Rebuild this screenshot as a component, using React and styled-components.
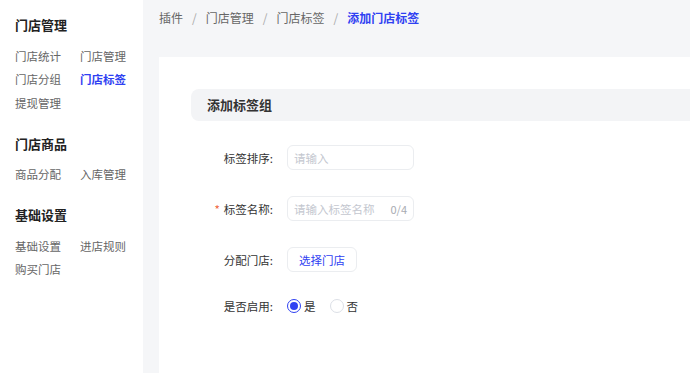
import React from "react";
import styled, { createGlobalStyle } from "styled-components";

const Global = createGlobalStyle`
  html, body { margin: 0; padding: 0; }
  body { font-family: "Noto Sans CJK SC", "Noto Sans", sans-serif; color: #333; }
  * { box-sizing: border-box; }
`;

const BLUE = "#2f41f2";

const Page = styled.div`
  display: flex;
  width: 100%;
  height: 100vh;
  overflow: hidden;
`;

const Sidebar = styled.aside`
  width: 143px;
  flex-shrink: 0;
  background: #fff;
  padding: 15px 0 0 15px;
`;

const SectionTitle = styled.div`
  font-size: 13px;
  font-weight: 700;
  line-height: 20px;
  color: #222;
  margin-top: ${(p) => (p.$first ? 0 : "19px")};
  margin-bottom: 9px;
`;

const ItemGrid = styled.div`
  display: grid;
  grid-template-columns: 65px 65px;
  grid-auto-rows: 23.5px;
  align-items: center;
`;

const Item = styled.div`
  font-size: 11.5px;
  line-height: 16px;
  color: ${(p) => (p.$active ? BLUE : "#666")};
  font-weight: ${(p) => (p.$active ? 700 : 400)};
  white-space: nowrap;
`;

const Main = styled.main`
  flex: 1;
  background: #f5f6f8;
  padding-left: 16px;
  display: flex;
  flex-direction: column;
  min-width: 0;
`;

const Breadcrumb = styled.nav`
  height: 57px;
  display: flex;
  align-items: flex-start;
  padding-top: 9px;
  font-size: 12px;
  line-height: 17px;
  color: #666;
`;

const Crumb = styled.span`
  color: ${(p) => (p.$current ? BLUE : "#666")};
  font-weight: ${(p) => (p.$current ? 700 : 400)};
`;

const Sep = styled.span`
  color: #aaa;
  padding: 0 9px;
`;

const Card = styled.section`
  flex: 1;
  background: #fff;
  padding: 32px 0 0 32px;
`;

const CardHeader = styled.div`
  height: 32px;
  line-height: 32px;
  background: #f3f4f6;
  border-radius: 8px 0 0 8px;
  padding-left: 16px;
  font-size: 13px;
  font-weight: 700;
  color: #333;
`;

const Form = styled.div`
  display: flex;
  flex-direction: column;
  gap: 26px;
  margin-top: 24px;
`;

const Row = styled.div`
  display: flex;
  align-items: center;
  height: ${(p) => (p.$short ? "16px" : "25px")};
`;

const Label = styled.label`
  width: 84px;
  padding-right: 2px;
  margin-right: 12px;
  text-align: right;
  font-size: 11.5px;
  color: #333;
  white-space: nowrap;
`;

const Star = styled.span`
  color: #f0643c;
  margin-right: 4px;
`;

const InputBox = styled.div`
  width: 127px;
  height: 25px;
  border: 1px solid #ebedf0;
  border-radius: 6px;
  display: flex;
  align-items: center;
  padding: 0 6px;
`;

const Input = styled.input`
  flex: 1;
  min-width: 0;
  border: none;
  outline: none;
  background: transparent;
  font-family: inherit;
  font-size: 11.5px;
  padding: 0;
  color: #333;
  &::placeholder { color: #c4c7cf; }
`;

const Counter = styled.span`
  font-size: 11px;
  color: #a8abb2;
`;

const Button = styled.button`
  width: 70px;
  height: 25px;
  border: 1px solid #ebedf0;
  border-radius: 6px;
  background: #fff;
  color: ${BLUE};
  font-family: inherit;
  font-size: 11.5px;
  padding: 0;
  cursor: pointer;
`;

const RadioGroup = styled.div`
  display: flex;
  align-items: center;
  gap: 14px;
`;

const RadioOption = styled.label`
  display: flex;
  align-items: center;
  gap: 3px;
  font-size: 11.5px;
  color: #333;
`;

const RadioDot = styled.span`
  width: 14px;
  height: 14px;
  border-radius: 50%;
  border: 1px solid ${(p) => (p.$checked ? BLUE : "#dcdfe6")};
  display: flex;
  align-items: center;
  justify-content: center;
  &::after {
    content: "";
    width: 8px;
    height: 8px;
    border-radius: 50%;
    background: ${(p) => (p.$checked ? BLUE : "transparent")};
  }
`;

const menu = [
  { title: "门店管理", items: ["门店统计", "门店管理", "门店分组", "门店标签", "提现管理"] },
  { title: "门店商品", items: ["商品分配", "入库管理"] },
  { title: "基础设置", items: ["基础设置", "进店规则", "购买门店"] },
];

export default function App() {
  const crumbs = ["插件", "门店管理", "门店标签", "添加门店标签"];
  return (
    <>
      <Global />
      <Page>
        <Sidebar>
          {menu.map((sec, i) => (
            <div key={sec.title}>
              <SectionTitle $first={i === 0}>{sec.title}</SectionTitle>
              <ItemGrid>
                {sec.items.map((it) => (
                  <Item key={it} $active={it === "门店标签"}>{it}</Item>
                ))}
              </ItemGrid>
            </div>
          ))}
        </Sidebar>
        <Main>
          <Breadcrumb>
            {crumbs.map((c, i) => (
              <React.Fragment key={c}>
                {i > 0 && <Sep>/</Sep>}
                <Crumb $current={i === crumbs.length - 1}>{c}</Crumb>
              </React.Fragment>
            ))}
          </Breadcrumb>
          <Card>
            <CardHeader>添加标签组</CardHeader>
            <Form>
              <Row>
                <Label>标签排序:</Label>
                <InputBox>
                  <Input placeholder="请输入" />
                </InputBox>
              </Row>
              <Row>
                <Label><Star>*</Star>标签名称:</Label>
                <InputBox>
                  <Input placeholder="请输入标签名称" />
                  <Counter>0/4</Counter>
                </InputBox>
              </Row>
              <Row>
                <Label>分配门店:</Label>
                <Button>选择门店</Button>
              </Row>
              <Row $short>
                <Label>是否启用:</Label>
                <RadioGroup>
                  <RadioOption><RadioDot $checked />是</RadioOption>
                  <RadioOption><RadioDot />否</RadioOption>
                </RadioGroup>
              </Row>
            </Form>
          </Card>
        </Main>
      </Page>
    </>
  );
}
